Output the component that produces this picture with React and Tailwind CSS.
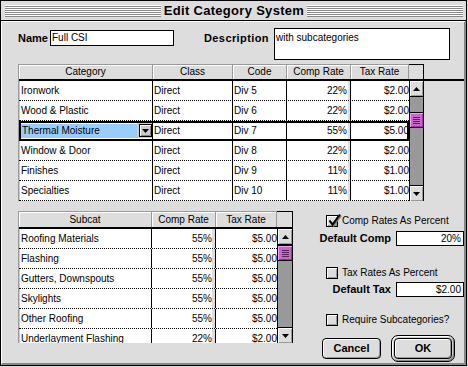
import React from 'react';

const topRows = [
  ['Ironwork', 'Direct', 'Div 5', '22%', '$2.00'],
  ['Wood & Plastic', 'Direct', 'Div 6', '22%', '$2.00'],
  ['Thermal Moisture', 'Direct', 'Div 7', '55%', '$5.00'],
  ['Window & Door', 'Direct', 'Div 8', '22%', '$2.00'],
  ['Finishes', 'Direct', 'Div 9', '11%', '$1.00'],
  ['Specialties', 'Direct', 'Div 10', '11%', '$1.00'],
];

const subRows = [
  ['Roofing Materials', '55%', '$5.00'],
  ['Flashing', '55%', '$5.00'],
  ['Gutters, Downspouts', '55%', '$5.00'],
  ['Skylights', '55%', '$5.00'],
  ['Other Roofing', '55%', '$5.00'],
  ['Underlayment Flashing', '22%', '$2.00'],
];

const topCols = [
  { label: 'Category', w: 'w-[134px]', cell: 'justify-start pl-[2px] shadow-[inset_1px_0_0_#ccc]' },
  { label: 'Class', w: 'w-[80px]', cell: 'justify-start pl-[1px]' },
  { label: 'Code', w: 'w-[54px]', cell: 'justify-start pl-[1px]' },
  { label: 'Comp Rate', w: 'w-[64px]', cell: 'justify-end pr-[3px] shadow-[inset_-2px_0_0_#ddd]' },
  { label: 'Tax Rate', w: 'w-[58px]', cell: 'justify-end' },
];

const subCols = [
  { label: 'Subcat', w: 'w-[133px]', cell: 'justify-start pl-[2px] shadow-[inset_1px_0_0_#ccc]' },
  { label: 'Comp Rate', w: 'w-[64px]', cell: 'justify-end pr-[3px] shadow-[inset_-3px_0_0_#ddd]' },
  { label: 'Tax Rate', w: 'w-[61px]', cell: 'justify-end' },
];

function Arrow({ up }) {
  return (
    <svg width="7" height="4" viewBox="0 0 7 4">
      <path d={up ? 'M3.5 0 7 4H0z' : 'M0 0h7L3.5 4z'} fill="#000" />
    </svg>
  );
}

function ArrowBox({ up }) {
  return (
    <div
      className={`h-[16px] shrink-0 flex items-center justify-center bg-[#ddd] border-black shadow-[inset_1px_1px_0_#fff,inset_-1px_-1px_0_#999] ${
        up ? 'border-b' : 'border-t'
      }`}
    >
      <Arrow up={up} />
    </div>
  );
}

function ScrollBar({ w, h, thumbTop }) {
  return (
    <div className={`${w} ${h} flex flex-col border-x border-black bg-[#999]`}>
      <ArrowBox up />
      <div className="flex-1 flex flex-col">
        <div
          className={`${thumbTop} h-[16px] border-y border-black bg-[#cc66cc] shadow-[inset_1px_1px_0_#f0a0f0,inset_-1px_-1px_0_#993399] flex flex-col items-center justify-center gap-[1px]`}
        >
          <div className="w-[7px] h-[1px] bg-[#552255]" />
          <div className="w-[7px] h-[1px] bg-[#552255]" />
          <div className="w-[7px] h-[1px] bg-[#552255]" />
          <div className="w-[7px] h-[1px] bg-[#552255]" />
        </div>
      </div>
      <ArrowBox />
    </div>
  );
}

function Table({ cols, rows, headH, bodyH, scrollW, thumbTop, selected }) {
  return (
    <div className="flex flex-col border-l border-[#999] self-start">
      <div className="flex">
        {cols.map((c) => (
          <div
            key={c.label}
            className={`${c.w} ${headH} flex items-center justify-center border-t border-r border-[#999] bg-[#ddd] shadow-[inset_1px_1px_0_#fff]`}
          >
            {c.label}
          </div>
        ))}
        <div className={`${scrollW} ${headH} border-t border-r border-black bg-[#ddd]`} />
      </div>
      <div className="h-[2px] bg-black" />
      <div className="flex">
        <div className={`${bodyH} flex flex-col overflow-hidden bg-white`}>
          {rows.map((r, i) => (
            <div
              key={r[0]}
              className={`flex h-[20px] shrink-0 border-b border-dotted border-black ${
                i === selected ? 'outline-2 outline-black -outline-offset-2' : ''
              }`}
            >
              {r.map((v, j) => {
                const last = j === r.length - 1;
                const c = cols[j];
                if (i === selected && j === 0) {
                  return (
                    <div key={j} className={`${c.w} flex items-center pl-[2px] border-r border-black`}>
                      <div className="flex-1 h-[14px] bg-[#99ccff] flex items-center pl-[1px]">{v}</div>
                      <div className="w-[15px] h-[15px] bg-[#ccc] flex items-center justify-end">
                        <div className="w-[13px] h-[13px] border border-black bg-[#ccc] shadow-[inset_1px_1px_0_#fff,inset_-1px_-1px_0_#888] flex items-center justify-center">
                          <Arrow />
                        </div>
                      </div>
                    </div>
                  );
                }
                return (
                  <div
                    key={j}
                    className={`${c.w} flex items-center whitespace-nowrap ${c.cell} ${last ? '' : 'border-r border-black'}`}
                  >
                    {v}
                  </div>
                );
              })}
            </div>
          ))}
        </div>
        <ScrollBar w={scrollW} h={bodyH} thumbTop={thumbTop} />
      </div>
    </div>
  );
}

function Check({ checked, label, mt }) {
  return (
    <div className={`${mt} flex items-center h-[12px] pl-[6px]`}>
      <div className="relative w-[12px] h-[12px] border border-black bg-[#ddd] shadow-[inset_1px_1px_0_#fff,inset_-1px_-1px_0_#999]">
        {checked && (
          <svg className="absolute -top-[3px] left-[0px]" width="15" height="14" viewBox="0 0 15 14">
            <path d="M2.5 7.5 5.5 11.5 13 1.5" fill="none" stroke="#777" strokeWidth="2" transform="translate(1 1)" />
            <path d="M2.5 7.5 5.5 11.5 13 1.5" fill="none" stroke="#000" strokeWidth="2" />
          </svg>
        )}
      </div>
      <span className="ml-[4px] whitespace-nowrap">{label}</span>
    </div>
  );
}

function Field({ label, value, mt }) {
  return (
    <div className={`${mt} flex items-center`}>
      <div className="w-[71px] flex justify-end whitespace-nowrap font-bold text-[11px]">{label}</div>
      <div className="ml-[5px] w-[68px] h-[15px] border border-black bg-white flex items-center justify-end pr-[2px]">
        {value}
      </div>
    </div>
  );
}

export default function App() {
  return (
    <div className="w-[468px] h-[367px] bg-[#ddd] font-['Liberation_Sans',Arial,sans-serif] text-[10px] text-black leading-none">
      <div className="w-[467px] h-[366px] border border-black flex flex-col">
        {/* title bar */}
        <div className="h-[20px] shrink-0 border-b border-black flex items-center pl-[4px] pr-[3px]">
          <div className="flex-1 h-[12px] bg-[repeating-linear-gradient(to_bottom,#fff_0px,#fff_1px,#888_1px,#888_2px)]" />
          <div className="px-[3px] text-[13px] font-bold tracking-[0.3px]">Edit Category System</div>
          <div className="flex-1 h-[12px] bg-[repeating-linear-gradient(to_bottom,#fff_0px,#fff_1px,#888_1px,#888_2px)]" />
        </div>

        {/* body */}
        <div className="flex-1 flex flex-col border-l border-t border-white border-r-2 border-b-2 border-r-[#888] border-b-[#888] pl-[16px] pt-[6px]">
          <div className="flex items-start h-[32px]">
            <div className="mt-[2px] w-[32px] h-[16px] flex items-center font-bold text-[11px]">Name</div>
            <div className="mt-[2px] w-[124px] h-[16px] border border-black bg-white flex items-center pl-[1px]">
              Full CSI
            </div>
            <div className="ml-[30px] mt-[2px] w-[70px] h-[16px] flex items-center font-bold text-[11px] tracking-[0.4px]">
              Description
            </div>
            <div className="w-[176px] h-[32px] border border-black bg-white pl-[1px] pt-[4px]">with subcategories</div>
          </div>

          <div className="mt-[4px]">
            <Table
              cols={topCols}
              rows={topRows}
              headH="h-[15px]"
              bodyH="h-[120px]"
              scrollW="w-[15px]"
              thumbTop="mt-[15px]"
              selected={2}
            />
          </div>

          <div className="mt-[10px] flex items-start">
            <Table
              cols={subCols}
              rows={subRows}
              headH="h-[16px]"
              bodyH="h-[114px]"
              scrollW="w-[16px]"
              thumbTop="mt-0"
            />

            <div className="ml-[27px] pt-[4px] w-[144px] flex flex-col">
              <Check checked label="Comp Rates As Percent" mt="mt-0" />
              <Field label="Default Comp" value="20%" mt="mt-[4px]" />
              <Check label="Tax Rates As Percent" mt="mt-[21px]" />
              <Field label="Default Tax" value="$2.00" mt="mt-[3px]" />
              <Check label="Require Subcategories?" mt="mt-[17px]" />
              <div className="mt-[9px] flex items-center h-[27px]">
                <div className="ml-[2px] w-[59px] h-[21px] rounded-[4px] border border-black bg-[#ddd] shadow-[inset_1px_1px_0_#fff,inset_-1px_-1px_0_#999] flex items-center justify-center font-bold text-[11px]">
                  Cancel
                </div>
                <div className="ml-[10px] w-[64px] h-[27px] rounded-[7px] border border-black bg-[#ccc] shadow-[inset_1px_1px_0_#fff,inset_-1px_-1px_0_#888] p-[2px] flex">
                  <div className="flex-1 rounded-[4px] border border-black bg-[#ddd] shadow-[inset_1px_1px_0_#fff,inset_-1px_-1px_0_#999] flex items-center justify-center font-bold text-[11px]">
                    OK
                  </div>
                </div>
              </div>
            </div>
          </div>
        </div>
      </div>
    </div>
  );
}
